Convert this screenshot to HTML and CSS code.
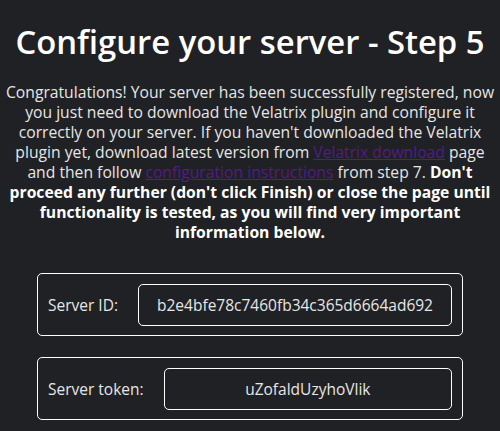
FILE: index.html
```html
<!DOCTYPE html>
<html>
<head>
<meta charset="utf-8">
<link rel="stylesheet" href="styles.css">
</head>
<body>
<main class="page">
  <h1 class="title">Configure your server - Step 5</h1>
  <p class="intro">Congratulations! Your server has been successfully registered, now<br>
  you just need to download the Velatrix plugin and configure it<br>
  correctly on your server. If you haven't downloaded the Velatrix<br>
  plugin yet, download latest version from <a class="link" href="#">Velatrix download</a> page<br>
  and then follow <a class="link" href="#">configuration instructions</a> from step 7. <strong>Don't<br>
  proceed any further (don't click Finish) or close the page until<br>
  functionality is tested, as you will find very important<br>
  information below.</strong></p>
  <div class="fields">
    <div class="field">
      <span class="label">Server ID:</span>
      <div class="value">b2e4bfe78c7460fb34c365d6664ad692</div>
    </div>
    <div class="field">
      <span class="label">Server token:</span>
      <div class="value">uZofaldUzyhoVlik</div>
    </div>
  </div>
</main>
</body>
</html>
```
FILE: styles.css
```css
html, body {
  margin: 0;
  padding: 0;
  background: #202124;
}
.page {
  font-family: "Open Sans", "Noto Sans", sans-serif;
  color: #e6e6e6;
  text-align: center;
  padding-top: 22px;
}
.title {
  margin: 0;
  font-size: 32.8px;
  line-height: 40px;
  font-weight: 600;
  color: #ffffff;
}
.intro {
  margin: 20px 0 0;
  font-size: 15.7px;
  line-height: 20px;
  font-weight: 400;
}
.intro strong {
  color: #ffffff;
  font-weight: 700;
}
.link {
  color: #551a8b;
}
.fields {
  display: flex;
  flex-direction: column;
  gap: 21px;
  margin: 31px 37px 0;
}
.field {
  display: flex;
  align-items: center;
  gap: 20px;
  height: 63px;
  box-sizing: border-box;
  border: 1px solid #ffffff;
  border-radius: 5px;
  padding: 0 10px;
  font-size: 15.5px;
}
.label {
  white-space: nowrap;
}
.value {
  flex: 1;
  height: 42px;
  box-sizing: border-box;
  border: 1px solid #ffffff;
  border-radius: 5px;
  display: flex;
  align-items: center;
  justify-content: center;
}
```
